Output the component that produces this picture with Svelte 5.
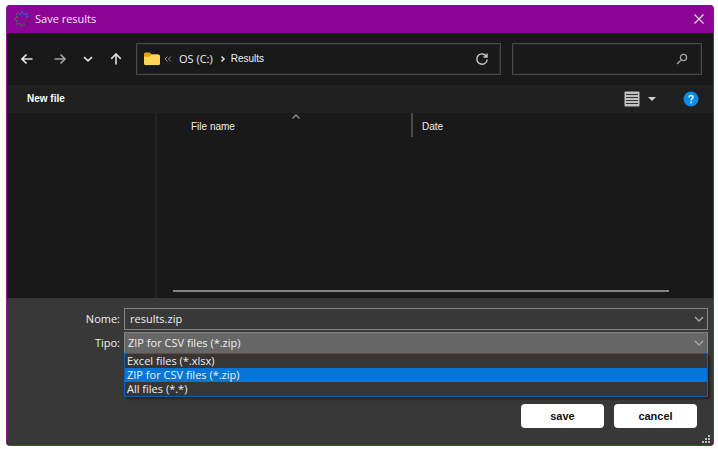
<script>
  const types = ['Excel files (*.xlsx)', 'ZIP for CSV files (*.zip)', 'All files (*.*)'];
  let selected = $state(types[1]);
  let fileName = $state('results.zip');
  let query = $state('');

  const ring = Array.from({ length: 16 }, (_, i) => {
    const a = (i / 16) * Math.PI * 2;
    const hue = i < 3 ? '#7c1040' : i < 8 ? '#2f7a4a' : i < 11 ? '#4a6a55' : '#2f6fd8';
    const r = i % 2 ? 5.4 : 6.8;
    return { x: 8 + Math.cos(a) * r, y: 8 + Math.sin(a) * r, hue };
  });
</script>

<div class="frame">
  <main class="dialog">
    <header class="titlebar">
      <svg class="logo" width="16" height="16" viewBox="0 0 16 16" aria-hidden="true">
        {#each ring as dot}
          <circle cx={dot.x} cy={dot.y} r="1" fill={dot.hue} />
        {/each}
      </svg>
      <h1>Save results</h1>
      <button class="close" aria-label="Close">
        <svg width="10" height="10" viewBox="0 0 10 10"><path d="M0.5 0.5 9.5 9.5M9.5 0.5 0.5 9.5" stroke="#ecd4f0" stroke-width="1.2" fill="none" /></svg>
      </button>
    </header>

    <nav class="navbar">
      <div class="arrows">
        <button aria-label="Back"><svg width="12" height="12" viewBox="0 0 12 12"><path d="M11.5 6H1M5.5 1.5 1 6l4.500 4.500" stroke="#e4e4e4" /></svg></button>
        <button class="forward" aria-label="Forward"><svg width="12" height="12" viewBox="0 0 12 12"><path d="M.5 6H11M6.500 1.500 11 6l-4.500 4.500" stroke="#a0a0a0" /></svg></button>
        <button aria-label="Recent locations"><svg width="12" height="12" viewBox="0 0 12 12"><path d="M2 4.200 6 7.800l4-3.600" stroke="#dcdcdc" /></svg></button>
        <button aria-label="Up"><svg width="12" height="12" viewBox="0 0 12 12"><path d="M6 11.500V1M1.200 5.800 6 1l4.800 4.800" stroke="#d8d8d8" /></svg></button>
      </div>
      <div class="address">
        <svg width="16" height="14" viewBox="0 0 16 14" aria-hidden="true">
          <path d="M0 2a1.500 1.500 0 0 1 1.500-1.500h4L8 2.500h6v4H0z" fill="#e8a20c" />
          <path d="M0 4.800h5.600L7.600 2.500H14.500A1.500 1.500 0 0 1 16 4v7.500a1.500 1.500 0 0 1-1.500 1.500h-13A1.500 1.500 0 0 1 0 11.500z" fill="#ffd558" />
        </svg>
        <svg class="collapsed" width="8" height="8" viewBox="0 0 8 8" aria-hidden="true"><path d="M3.500 1.500 1 4l2.500 2.500M7 1.500 4.500 4 7 6.500" stroke="#8c8c8c" fill="none" /></svg>
        <a class="drive" href="#drive">OS (C:)</a>
        <svg class="crumb" width="6" height="8" viewBox="0 0 6 8" aria-hidden="true"><path d="M1.500 1.500 4 4 1.500 6.500" stroke="#e0e0e0" stroke-width="1.500" fill="none" /></svg>
        <a href="#results">Results</a>
        <button class="refresh" aria-label="Refresh">
          <svg width="14" height="14" viewBox="0 0 14 14"><path d="M11.800 5A5.200 5.200 0 1 0 12.200 7.500M12 1.500V5H8.500" stroke="#c8c8c8" stroke-width="1.400" fill="none" /></svg>
        </button>
      </div>
      <div class="search">
        <input type="search" aria-label="Search" bind:value={query} />
        <svg width="12" height="12" viewBox="0 0 12 12" aria-hidden="true"><circle cx="7.500" cy="4.500" r="3.100" stroke="#a0a0a0" stroke-width="1.300" fill="none" /><path d="M5.300 6.700 1 11" stroke="#a0a0a0" stroke-width="1.400" /></svg>
      </div>
    </nav>

    <div class="toolbar">
      <button class="new">New file</button>
      <button class="view" aria-label="Change view">
        <svg width="16" height="16" viewBox="0 0 16 16"><rect x="0.500" y="0.500" width="15" height="15" rx="1" fill="#c0c0c0" /><path d="M2 3.500h12M2 6.500h12M2 9.500h12M2 12.500h12" stroke="#303030" stroke-width="1.200" /></svg>
        <svg width="8" height="4" viewBox="0 0 8 4"><path d="M0 0h8L4 4z" fill="#d0d0d0" /></svg>
      </button>
      <button class="help" aria-label="Help">
        <svg width="16" height="16" viewBox="0 0 16 16"><circle cx="8" cy="8" r="7.500" fill="#0c8ce4" /><path d="M6.100 6.400C6.100 3.800 10 3.900 10 6.200 10 7.700 8.100 7.700 8.100 9.500" fill="none" stroke="#f0f8ff" stroke-width="1.500" /><circle cx="8.100" cy="11.500" r="0.900" fill="#f0f8ff" /></svg>
      </button>
    </div>

    <div class="browser">
      <aside aria-label="Folders"></aside>
      <section>
        <table>
          <thead>
            <tr>
              <th class="name">
                File name
                <svg class="sort" width="8" height="5" viewBox="0 0 8 5" aria-hidden="true"><path d="M0.500 4.500 4 1l3.500 3.500" stroke="#909090" stroke-width="1.300" fill="none" /></svg>
              </th>
              <th>Date</th>
            </tr>
          </thead>
        </table>
        <div class="scrollbar"></div>
      </section>
    </div>

    <form class="details" onsubmit={(e) => e.preventDefault()}>
      <div class="fields">
        <label for="name">Nome:</label>
        <div class="control">
          <input id="name" type="text" bind:value={fileName} />
          <svg class="chevron" width="10" height="6" viewBox="0 0 10 6" aria-hidden="true"><path d="M1 1l4 4 4-4" /></svg>
        </div>
        <label for="type">Tipo:</label>
        <div class="control">
          <select id="type" bind:value={selected}>
            {#each types as type}<option>{type}</option>{/each}
          </select>
          <svg class="chevron" width="10" height="6" viewBox="0 0 10 6" aria-hidden="true"><path d="M1 1l4 4 4-4" /></svg>
          <div class="menu" role="listbox" aria-label="Tipo">
            {#each types as type}
              <button type="button" role="option" aria-selected={type === selected} class:active={type === selected} onclick={() => (selected = type)}>{type}</button>
            {/each}
          </div>
        </div>
      </div>
      <div class="actions">
        <button type="submit">save</button>
        <button type="button">cancel</button>
      </div>
      <svg class="grip" width="9" height="9" viewBox="0 0 9 9" aria-hidden="true">
        <path d="M6 0h2v2H6zM6 3h2v2H6zM3 3h2v2H3zM6 6h2v2H6zM3 6h2v2H3zM0 6h2v2H0z" fill="#bcbcbc" />
      </svg>
    </form>
  </main>
</div>

<style>
  :global(body) {
    margin: 0;
    background: #fff;
  }
  .frame {
    box-sizing: border-box;
    display: flex;
    min-height: 100vh;
    padding: 5px 4px 4px 6px;
    font: 10px/14px "Liberation Sans", Arial, sans-serif;
    color: #f0f0f0;
  }
  .dialog {
    flex: 1;
    display: flex;
    flex-direction: column;
    min-width: 0;
    box-sizing: border-box;
    border: 1px solid #8a1c92;
    border-top: 0;
    border-radius: 4px;
    background: #191919;
    overflow: hidden;
  }
  button {
    display: flex;
    align-items: center;
    justify-content: center;
    margin: 0;
    padding: 0;
    border: 0;
    background: none;
    color: inherit;
    font: inherit;
  }
  a {
    color: inherit;
    text-decoration: none;
  }
  .titlebar {
    display: flex;
    align-items: center;
    height: 28px;
    margin: 0 -1px;
    padding: 0 10px 0 8px;
    background: #8b0496;
  }
  h1 {
    flex: 1;
    margin: 0 0 0 5px;
    font: 11px/14px "Open Sans", "Noto Sans", sans-serif;
    color: #f6e6f8;
  }
  .navbar {
    display: flex;
    align-items: center;
    gap: 11px;
    height: 52px;
    padding: 0 11px 0 14px;
  }
  .arrows {
    display: flex;
    flex: none;
    gap: 16px;
    width: 104px;
  }
  .forward {
    margin-left: 5px;
  }
  .arrows path {
    fill: none;
    stroke-width: 1.7;
  }
  .address,
  .search {
    box-sizing: border-box;
    display: flex;
    align-items: center;
    min-width: 0;
    height: 32px;
    border: 1px solid #484848;
    outline: 1px solid #262626;
    outline-offset: -2px;
  }
  .address {
    flex: 365 1 365px;
    padding: 0 11px 0 7px;
  }
  .collapsed {
    margin: 0 7px 0 4px;
  }
  .drive {
    font: 11px/16px "Open Sans", "Noto Sans", sans-serif;
  }
  .crumb {
    margin: 0 5px 0 7px;
  }
  .refresh {
    margin-left: auto;
  }
  .search {
    flex: 190 1 190px;
    padding: 0 13px 0 8px;
  }
  .search input {
    flex: 1;
    min-width: 0;
    border: 0;
    padding: 0;
    outline: 0;
    background: none;
    color: inherit;
    font: inherit;
  }
  .toolbar {
    display: flex;
    align-items: center;
    height: 28px;
    padding: 0 14px 0 20px;
    background: #202020;
  }
  .new {
    margin-right: auto;
    font-weight: bold;
    color: #fff;
  }
  .view {
    gap: 8px;
    margin-right: 27px;
  }
  .browser {
    flex: 1;
    display: flex;
    min-height: 185px;
  }
  aside {
    flex: 0 0 148px;
    border-right: 2px solid #242424;
  }
  section {
    flex: 1;
    display: flex;
    flex-direction: column;
  }
  table {
    width: 100%;
    table-layout: fixed;
    border-collapse: collapse;
  }
  th {
    box-sizing: border-box;
    height: 24px;
    padding: 4px 0 0 9px;
    text-align: left;
    font-weight: normal;
  }
  th.name {
    position: relative;
    width: 255px;
    padding-left: 34px;
    border-right: 2px solid #4a4a4a;
  }
  .sort {
    position: absolute;
    top: 1px;
    left: 50%;
    margin-left: 8px;
  }
  .scrollbar {
    height: 2px;
    margin: auto 44px 6px 16px;
    background: #858585;
  }
  .details {
    position: relative;
    padding: 10px 5px 17px 7px;
    background: #383838;
    font: 11px/14px "Open Sans", "Noto Sans", sans-serif;
  }
  .fields {
    display: grid;
    grid-template-columns: 106px 1fr;
    gap: 2px 4px;
    align-items: center;
  }
  label {
    text-align: right;
  }
  .control {
    position: relative;
    display: flex;
  }
  .control input,
  .control select {
    box-sizing: border-box;
    flex: 1;
    min-width: 0;
    height: 22px;
    margin: 0;
    border: 1px solid #858585;
    border-radius: 0;
    outline: 0;
    appearance: none;
    background: #383838;
    color: inherit;
    font: inherit;
  }
  .control input {
    padding: 0 24px 2px 5px;
  }
  .control select {
    padding: 0 24px 0 3px;
    background: #666;
  }
  .chevron {
    position: absolute;
    top: 8px;
    right: 4px;
    fill: none;
    stroke: #a8a8a8;
    stroke-width: 1.3;
    pointer-events: none;
  }
  .menu {
    position: absolute;
    z-index: 1;
    top: 21px;
    left: 0;
    right: 0;
    border: 1px solid #0b62b4;
    background: #363636;
    box-shadow: 2px 2px 2px #222;
  }
  .menu button {
    justify-content: flex-start;
    width: 100%;
    height: 14px;
    padding: 0 2px;
  }
  .menu button.active {
    background: #0376d8;
  }
  .actions {
    display: flex;
    justify-content: flex-end;
    gap: 10px;
    margin: 50px 11px 0 0;
  }
  .actions button {
    width: 83px;
    height: 24px;
    border-radius: 4px;
    background: #fff;
    color: #111;
    font: bold 11px/14px "Liberation Sans", Arial, sans-serif;
  }
  .grip {
    position: absolute;
    right: 2px;
    bottom: 1px;
  }
</style>
